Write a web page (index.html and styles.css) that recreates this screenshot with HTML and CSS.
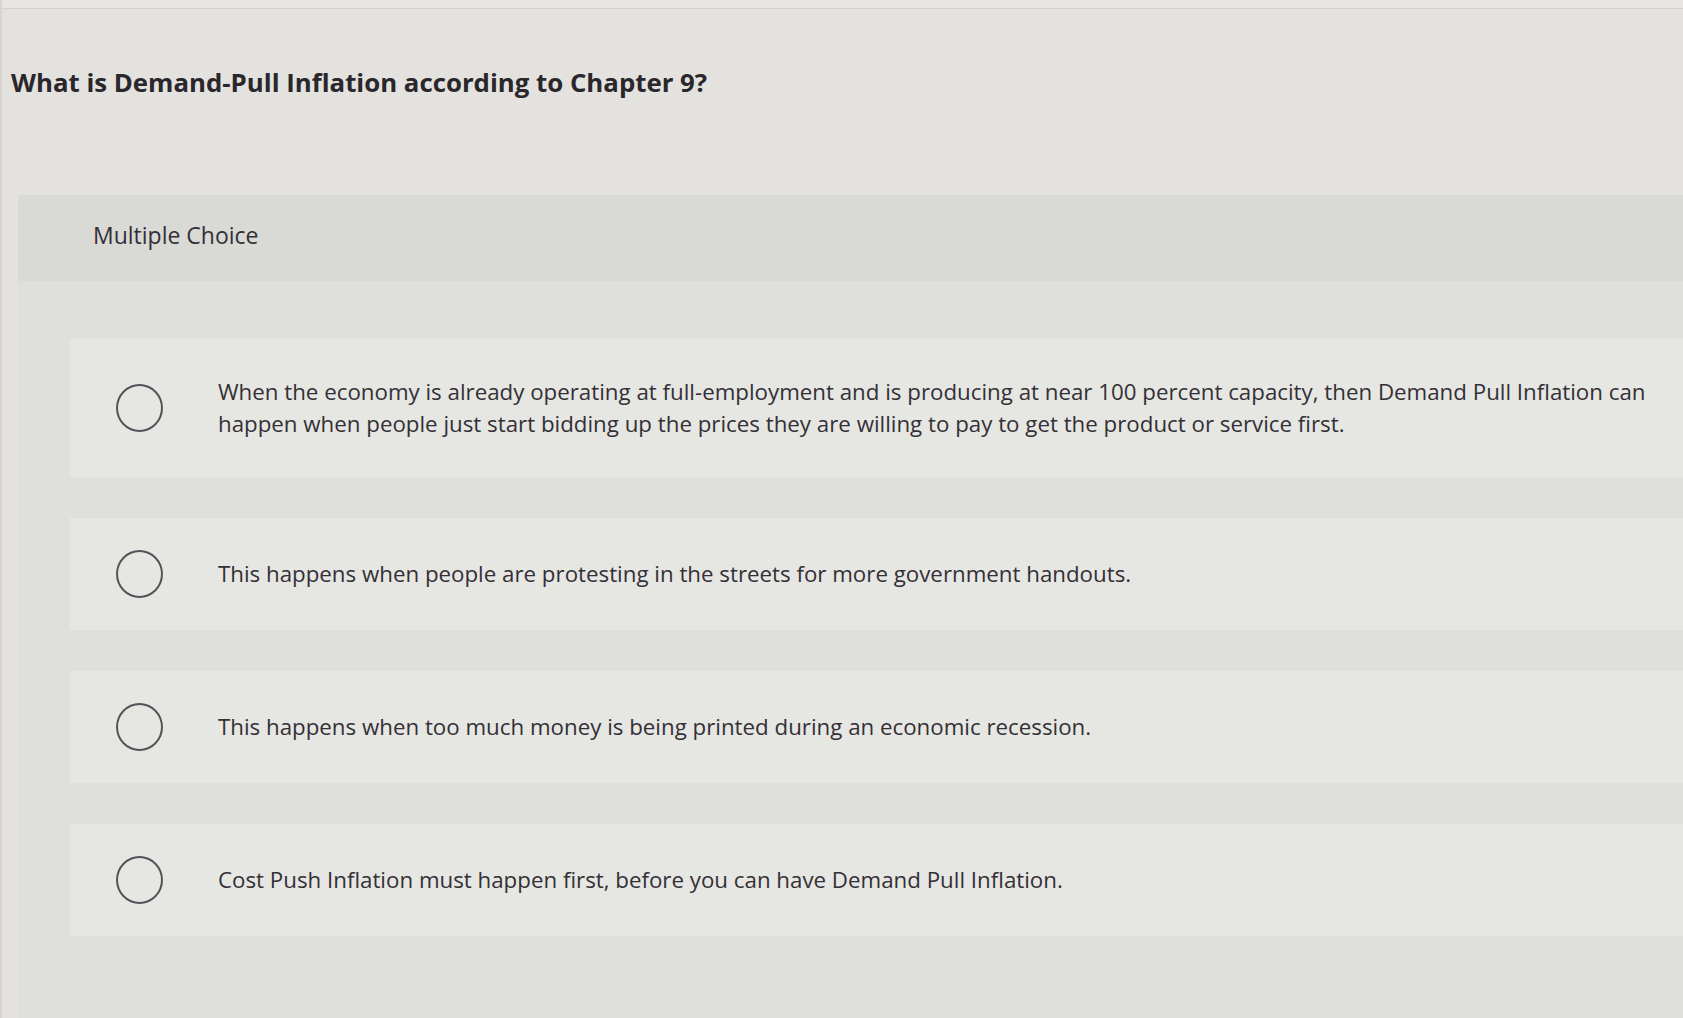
FILE: index.html
```html
<!DOCTYPE html>
<html lang="en">
<head>
<meta charset="utf-8">
<title>Multiple Choice</title>
<link rel="stylesheet" href="styles.css">
</head>
<body>
<div class="screen">
  <div class="topline"></div>
  <h1 class="question">What is Demand-Pull Inflation according to Chapter 9?</h1>
  <section class="panel">
    <div class="panel-head">Multiple Choice</div>
    <div class="options">
      <label class="option">
        <span class="radio"></span>
        <span class="option-text">When the economy is already operating at full-employment and is producing at near 100 percent capacity, then Demand Pull Inflation can happen when people just start bidding up the prices they are willing to pay to get the product or service first.</span>
      </label>
      <label class="option">
        <span class="radio"></span>
        <span class="option-text">This happens when people are protesting in the streets for more government handouts.</span>
      </label>
      <label class="option">
        <span class="radio"></span>
        <span class="option-text">This happens when too much money is being printed during an economic recession.</span>
      </label>
      <label class="option">
        <span class="radio"></span>
        <span class="option-text">Cost Push Inflation must happen first, before you can have Demand Pull Inflation.</span>
      </label>
    </div>
  </section>
</div>
</body>
</html>
```
FILE: styles.css
```css
html, body {
  margin: 0;
  padding: 0;
}
body {
  background: #e3e2de;
  font-family: "Open Sans", Lato, "Liberation Sans", sans-serif;
  color: #2f2c31;
  width: 1683px;
  height: 1018px;
  overflow: hidden;
}
.screen {
  display: flex;
  flex-direction: column;
  height: 1018px;
  border-left: 2px solid #d6d5d1;
}
.topline {
  height: 8px;
  border-bottom: 1px solid #d3d2ce;
  background: #e6e5e1;
}
.question {
  margin: 0;
  padding: 57px 0 0 9px;
  height: 186px;
  box-sizing: border-box;
  font-size: 25.8px;
  line-height: 32px;
  font-weight: 700;
  color: #2a272c;
}
.panel {
  margin-left: 16px;
  flex: 1;
  background: #dfdfdb;
  display: flex;
  flex-direction: column;
}
.panel-head {
  height: 86px;
  box-sizing: border-box;
  display: flex;
  align-items: center;
  padding: 0 0 6px 75px;
  background: #d9d9d6;
  font-size: 23px;
  color: #333036;
}
.options {
  display: flex;
  flex-direction: column;
  gap: 41px;
  padding: 58px 0 0 52px;
}
.option {
  display: flex;
  align-items: center;
  box-sizing: border-box;
  min-height: 112px;
  background: #e6e6e2;
  padding: 37px 0 37px 46px;
}
.radio {
  flex: none;
  width: 47px;
  height: 48px;
  box-sizing: border-box;
  border: 2px solid #55525a;
  border-radius: 50%;
  margin: -7px 55px -7px 0;
}
.option-text {
  font-size: 22.3px;
  line-height: 32px;
  color: #333036;
}
```
